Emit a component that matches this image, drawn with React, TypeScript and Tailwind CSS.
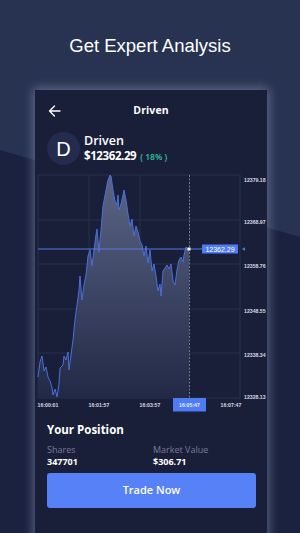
import React from "react";

const pts: [number, number][] = [
  [38, 377], [40, 362], [42, 356], [44, 371], [46, 367], [48, 377], [50, 381], [52, 388], [53, 395],
  [55, 389], [57, 397], [59, 384], [60, 368], [62, 366], [63, 365], [64, 356], [66, 360], [68, 352],
  [69, 370], [71, 355], [73, 340], [75, 320], [77, 305], [79, 290], [80, 276], [82, 300], [84, 285],
  [86, 275], [88, 256], [90, 250], [92, 266], [94, 250], [96, 235], [97, 229], [99, 252], [100, 240],
  [101, 230], [103, 206], [106, 190], [108, 180], [110, 175], [111, 176], [113, 190], [115, 201],
  [117, 205], [118, 195], [119, 210], [121, 204], [123, 195], [124, 190], [126, 200], [128, 214],
  [130, 226], [132, 219], [134, 236], [136, 226], [138, 232], [140, 241], [142, 245], [144, 256],
  [146, 246], [148, 263], [150, 250], [152, 271], [154, 264], [156, 276], [158, 291], [160, 284],
  [161, 296], [163, 271], [165, 268], [167, 265], [169, 269], [171, 264], [173, 281], [175, 285],
  [177, 270], [179, 260], [181, 257], [183, 262], [184, 255], [186, 247], [188, 249], [189, 249],
];

const linePath = pts.map((p, i) => `${i === 0 ? "M" : "L"}${p[0]} ${p[1]}`).join(" ");
const areaPath = `${linePath} L189 398 L38 398 Z`;

const yLabels: [string, number][] = [
  ["12379.18", 180],
  ["12368.97", 222],
  ["12358.76", 266],
  ["12348.55", 311],
  ["12338.34", 355],
  ["12328.13", 397],
];

const xLabels: [string, number][] = [
  ["16:00:01", 48],
  ["16:01:57", 99],
  ["16:03:57", 150],
  ["16:07:47", 231],
];

function Chart() {
  return (
    <svg
      width={232}
      height={245}
      viewBox="35 170 232 245"
      className="block"
      style={{ fontFamily: "'Liberation Sans', Arial, sans-serif" }}
    >
      <defs>
        <linearGradient id="fill" x1="0" y1="175" x2="0" y2="398" gradientUnits="userSpaceOnUse">
          <stop offset="0" stopColor="#5d6586" />
          <stop offset="1" stopColor="#212946" />
        </linearGradient>
      </defs>
      <rect x={38} y={175} width={202} height={223} fill="none" stroke="#29314f" strokeWidth={1} />
      {[220, 264, 309, 353].map((y) => (
        <line key={y} x1={38} x2={240} y1={y} y2={y} stroke="#29314f" strokeWidth={1} />
      ))}
      {[89, 140].map((x) => (
        <line key={x} x1={x} x2={x} y1={175} y2={398} stroke="#29314f" strokeWidth={1} />
      ))}
      <path d={areaPath} fill="url(#fill)" />
      <path d={linePath} fill="none" stroke="#4a6fdc" strokeWidth={1} strokeLinejoin="round" />
      <line x1={189.5} x2={189.5} y1={175} y2={398} stroke="#8a93b0" strokeWidth={0.8} strokeDasharray="2 1.5" />
      <line x1={38} x2={202} y1={249} y2={249} stroke="#5878e0" strokeWidth={1} />
      <rect x={187.5} y={247.5} width={3} height={3} fill="#ffffff" />
      <rect x={202} y={244.5} width={36} height={9} fill="#4f7cf5" />
      <text x={220} y={251.8} fill="#ffffff" fontSize={7} textAnchor="middle">
        12362.29
      </text>
      <path d="M242 249 L245 247.3 L245 250.7 Z" fill="#4f7cf5" />
      {yLabels.map(([t, y]) => (
        <text key={t} x={244} y={y + 1.8} fill="#d8dbe6" fontSize={5.2} fontWeight={700}>
          {t}
        </text>
      ))}
      {xLabels.map(([t, x]) => (
        <text key={t} x={x} y={407} fill="#d8dbe6" fontSize={5.2} fontWeight={700} textAnchor="middle">
          {t}
        </text>
      ))}
      <rect x={173} y={398} width={33} height={13.5} rx={0.5} fill="#4f7cf5" />
      <text x={189.5} y={407} fill="#e8edff" fontSize={5.2} fontWeight={700} textAnchor="middle">
        16:05:47
      </text>
    </svg>
  );
}

export default function App() {
  return (
    <div className="relative w-[300px] h-[533px] overflow-hidden bg-[#1b2240]">
      <svg className="absolute inset-0" width={300} height={533} viewBox="0 0 300 533">
        <polygon points="0,0 300,0 300,237 0,150" fill="#283251" />
      </svg>
      <div className="relative flex flex-col items-center">
        <h1 className="mt-[35px] h-[22px] text-[18.5px] leading-[22px] text-white font-['Liberation_Sans',Arial,sans-serif]">
          Get Expert Analysis
        </h1>
        <div className="mt-[33px] ml-[2px] w-[232px] h-[460px] bg-[#1a1f39] shadow-[0_0_10px_2px_rgba(190,200,235,0.38)] font-['Open_Sans',sans-serif] text-white">
          <div className="relative h-[42px] flex items-center justify-center">
            <svg className="absolute left-[13px] top-[15px]" width={13} height={12} viewBox="0 0 13 12">
              <path d="M12 6 H1.5 M6.5 1 L1.5 6 L6.5 11" fill="none" stroke="#ffffff" strokeWidth={1.3} strokeLinecap="round" strokeLinejoin="round" />
            </svg>
            <span className="text-[10.5px] font-bold tracking-[0.1px]">Driven</span>
          </div>
          <div className="flex items-center pl-[12px] h-[33px]">
            <div className="w-[33px] h-[33px] rounded-full bg-[#242c4d] flex items-center justify-center text-[20px] leading-none font-['Liberation_Sans',Arial,sans-serif]">
              D
            </div>
            <div className="ml-[4px] flex flex-col">
              <span className="text-[12.5px] leading-[15px] font-semibold">Driven</span>
              <div className="flex items-baseline leading-[15px]">
                <span className="text-[11.5px] font-bold tracking-[-0.4px]">$12362.29</span>
                <span className="ml-[4px] text-[8.5px] font-semibold text-[#2fc39d]">( 18% )</span>
              </div>
            </div>
          </div>
          <div className="mt-[5px]">
            <Chart />
          </div>
          <div className="px-[12px]">
            <div className="mt-[8px] text-[11.5px] leading-[14px] font-bold">Your Position</div>
            <div className="mt-[7px] grid grid-cols-2">
              <div className="flex flex-col">
                <span className="text-[9px] leading-[12px] text-[#757c97]">Shares</span>
                <span className="text-[9px] leading-[12px] font-bold">347701</span>
              </div>
              <div className="flex flex-col pl-[2px]">
                <span className="text-[9px] leading-[12px] text-[#757c97]">Market Value</span>
                <span className="text-[9px] leading-[12px] font-bold">$306.71</span>
              </div>
            </div>
            <button className="mt-[5px] w-[209px] h-[35px] rounded-[3px] bg-[#5681f7] text-white text-[11px] font-semibold flex items-center justify-center">
              Trade Now
            </button>
          </div>
        </div>
      </div>
    </div>
  );
}
